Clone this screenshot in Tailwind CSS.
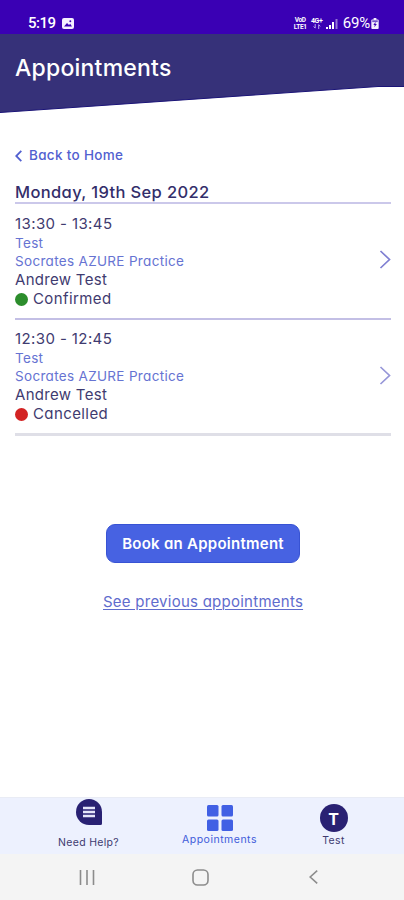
<!DOCTYPE html>
<html lang="en">
<head>
<meta charset="utf-8">
<title>Appointments</title>
<script src="https://cdn.jsdelivr.net/npm/@tailwindcss/browser@4"></script>
</head>
<body class="bg-white">
<div class="flex h-[900px] w-[404px] flex-col overflow-hidden bg-white font-['Inter','Liberation_Sans',sans-serif] text-[#3f3b70] [font-feature-settings:'cv11']">
  <div class="flex h-[34px] shrink-0 items-center bg-[#3a00b4] pr-[25px] pl-[28px] pt-3 text-white">
    <span class="font-['Roboto',sans-serif] text-[15px] leading-[20px] font-medium tracking-[-0.5px]">5:19</span>
    <svg class="ml-[6px]" width="12" height="11" viewBox="0 0 12 11"><rect width="12" height="11" rx="2" fill="#f4efff"/><path d="M2 8.5 5 5l2 2 1.2-1.2L10 8.5z" fill="#3a00b4"/><circle cx="8.3" cy="3.3" r="1" fill="#3a00b4"/></svg>
    <div class="ml-auto flex w-[15px] flex-col items-center gap-px font-['Roboto',sans-serif] text-[6.500px] leading-[6px] font-bold tracking-[-0.3px]"><span>VoD</span><span>LTE1</span></div>
    <div class="ml-[3px] flex w-[12px] flex-col items-center font-['Roboto',sans-serif] text-[7px] leading-[6px] font-bold tracking-[-0.3px]"><span>4G+</span>
      <svg width="8" height="5" viewBox="0 0 8 5" fill="none" stroke="#b9a5ef" stroke-width="1"><path d="M2.2 0v4M.6 2.500l1.600 1.700M5.700 5V.7M7.300 2.300 5.700.6"/></svg>
    </div>
    <svg class="ml-[3px]" width="12" height="11" viewBox="0 0 12 11" fill="#fff"><path d="M0 9h2v2H0zM3 7h2v4H3zM6 4h2v7H6z"/><path d="M9.500 1h2v10h-2z" opacity=".45"/></svg>
    <span class="ml-[5px] font-['Roboto',sans-serif] text-[15px] leading-[20px] tracking-[-0.2px]">69%</span>
    <svg class="ml-[1px]" width="8" height="11" viewBox="0 0 8 12"><path d="M2.500 0h3v1.500H7a1 1 0 0 1 1 1V11a1 1 0 0 1-1 1H1a1 1 0 0 1-1-1V2.500a1 1 0 0 1 1-1h1.500z" fill="#f4efff"/><path d="M1 2.500h6v2H1z" fill="#7656cb"/><path d="m4.700 4-2.500 3.500h1.500L3.300 10 6 6.500H4.400z" fill="#3a00b4"/></svg>
  </div>

  <header class="relative h-[80px] shrink-0 pt-[20px] pl-[15px] text-white">
    <svg class="absolute inset-0" width="404" height="80" viewBox="0 0 404 80"><path d="M0 0h404v52.500H378L0 78.500z" fill="#363179"/><path d="M0 78.500 378 52.500h26" fill="none" stroke="#1b1478"/></svg>
    <h1 class="relative text-[23px] leading-[28px] font-medium tracking-[0.22px]">Appointments</h1>
  </header>

  <main class="flex h-[683px] shrink-0 flex-col px-[15px] pt-[31px]">
    <a class="flex h-[20px] items-center gap-[7px] text-[13.500px] font-medium tracking-[0.32px] text-[#5260d0]">
      <svg class="mt-[2px]" width="7" height="12" viewBox="0 0 7 12" fill="none" stroke="currentColor" stroke-width="1.800"><path d="M6.300.8 1.200 6l5.100 5.200"/></svg><span>Back to Home</span>
    </a>
    <h2 class="mt-[16px] flex h-[23px] w-[376px] items-center border-b-2 border-[#cbc8ea] pt-[2px] text-[16.500px] font-medium tracking-[0.36px] text-[#332e6a]"><span>Monday, 19th Sep 2022</span></h2>

    <section class="flex h-[116px] w-[376px] items-center justify-between border-b-2 border-[#c3bfe5]">
      <div class="flex h-full flex-col pt-[10px] whitespace-nowrap">
        <p class="h-[20px] text-[15px] leading-[20px] tracking-[0.4px]"><span>13:30 - 13:45</span></p>
        <p class="h-[18px] text-[13.500px] leading-[18px] tracking-[0.32px] text-[#6673d2]"><span>Test</span></p>
        <p class="h-[18px] text-[13.500px] leading-[18px] tracking-[0.32px] text-[#6673d2]"><span>Socrates AZURE Practice</span></p>
        <p class="h-[19px] text-[15px] leading-[19px] tracking-[0.3px]"><span>Andrew Test</span></p>
        <p class="flex h-[20px] items-center gap-[5px] text-[15px] leading-[20px] tracking-[0.4px]"><i class="size-[13px] rounded-full bg-[#2c8d2c]"></i><span>Confirmed</span></p>
      </div>
      <svg class="mb-[3px]" width="12" height="19" viewBox="0 0 12 19" fill="none" stroke="#7f7fd2" stroke-width="1.700"><path d="m1.500 1 9 8.500-9 8.500"/></svg>
    </section>
    <section class="flex h-[116px] w-[376px] items-center justify-between border-b-[3px] border-[#dfdfe7]">
      <div class="flex h-full flex-col pt-[9px] whitespace-nowrap">
        <p class="h-[20px] text-[15px] leading-[20px] tracking-[0.4px]"><span>12:30 - 12:45</span></p>
        <p class="h-[18px] text-[13.500px] leading-[18px] tracking-[0.32px] text-[#6673d2]"><span>Test</span></p>
        <p class="h-[18px] text-[13.500px] leading-[18px] tracking-[0.32px] text-[#6673d2]"><span>Socrates AZURE Practice</span></p>
        <p class="h-[19px] text-[15px] leading-[19px] tracking-[0.3px]"><span>Andrew Test</span></p>
        <p class="flex h-[20px] items-center gap-[5px] text-[15px] leading-[20px] tracking-[0.4px]"><i class="size-[13px] rounded-full bg-[#d32323]"></i><span>Cancelled</span></p>
      </div>
      <svg class="mb-[3px]" width="12" height="19" viewBox="0 0 12 19" fill="none" stroke="#9696d8" stroke-width="1.700"><path d="m1.500 1 9 8.500-9 8.500"/></svg>
    </section>

    <button class="mt-[88px] ml-[91px] flex h-[39px] w-[194px] items-center justify-center rounded-[9px] border border-[#3853d4] bg-[#4762e2] pt-px text-[15px] font-semibold tracking-[0.26px] whitespace-nowrap text-white"><span>Book an Appointment</span></button>
    <a class="mt-[29px] ml-[88px] h-[20px] text-[15px] leading-[20px] tracking-[0.25px] whitespace-nowrap text-[#5f6ccd] underline decoration-1 underline-offset-2"><span>See previous appointments</span></a>
  </main>

  <nav class="flex h-[57px] shrink-0 border-t border-[#e9ecf5] bg-[#edf1fe] text-[10.500px] leading-[14px] whitespace-nowrap">
    <div class="ml-[38px] flex w-[101px] flex-col items-center pt-[1px]">
      <svg width="26" height="26" viewBox="0 0 26 26"><path d="M13 0a13 13 0 1 0 0 26h11.500a1.500 1.500 0 0 0 1.500-1.500V13A13 13 0 0 0 13 0z" fill="#292173"/><path d="M7 9h12M7 13h12M7 17h12" stroke="#e5e5fa" stroke-width="2.700"/></svg>
      <span class="mt-[11px] tracking-[0.3px]">Need Help?</span>
    </div>
    <div class="ml-[30px] flex w-[101px] flex-col items-center pt-[7px] text-[#405bda]">
      <svg width="26" height="26" viewBox="0 0 26 26" fill="#4160e4"><rect width="11.500" height="11.500" rx="1.500"/><rect x="14.500" width="11.500" height="11.500" rx="1.500"/><rect y="14.500" width="11.500" height="11.500" rx="1.500"/><rect x="14.500" y="14.500" width="11.500" height="11.500" rx="1.500"/></svg>
      <span class="mt-[2px] tracking-[0.5px]">Appointments</span>
    </div>
    <div class="ml-[13px] flex w-[101px] flex-col items-center pt-[6px]">
      <div class="flex size-[28px] items-center justify-center rounded-full bg-[#292173] pt-[2px] text-[16px] font-bold text-white"><span>T</span></div>
      <span class="mt-[2px] tracking-[0.3px]">Test</span>
    </div>
  </nav>
  <div class="flex h-[46px] shrink-0 items-center bg-[#f4f4f4] text-[#8c8c8c]">
    <svg class="ml-[79px]" width="16" height="15" viewBox="0 0 16 15" stroke="currentColor" stroke-width="1.600"><path d="M1.500 0v15M8 0v15M14.500 0v15"/></svg>
    <svg class="ml-[97px]" width="17" height="17" viewBox="0 0 17 17" fill="none" stroke="currentColor" stroke-width="1.600"><rect x="1" y="1" width="15" height="15" rx="4.500"/></svg>
    <svg class="ml-[100px]" width="9" height="14" viewBox="0 0 9 14" fill="none" stroke="currentColor" stroke-width="1.600"><path d="M8.200.6 1.200 7l7 6.400"/></svg>
  </div>
</div>
</body>
</html>
